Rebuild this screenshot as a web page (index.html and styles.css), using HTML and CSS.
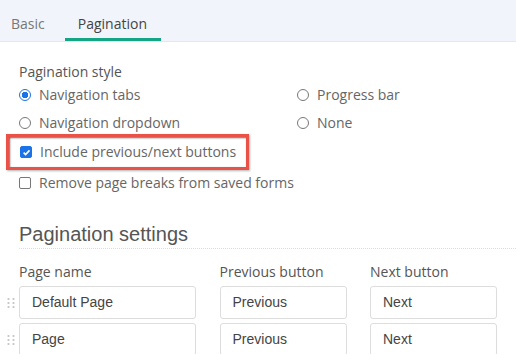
FILE: index.html
```html
<!DOCTYPE html>
<html>
<head>
    <title>Form settings</title>
    <meta charset="UTF-8">
    <link rel="stylesheet" href="styles.css">
</head>
<body>
    <div class="tabs">
        <div class="tab">Basic</div>
        <div class="tab active">Pagination</div>
    </div>

    <div class="panel">
        <div class="field-label">Pagination style</div>
        <div class="radio-grid">
            <label class="option"><span class="radio checked"></span>Navigation tabs</label>
            <label class="option"><span class="radio"></span>Progress bar</label>
            <label class="option"><span class="radio"></span>Navigation dropdown</label>
            <label class="option"><span class="radio"></span>None</label>
        </div>

        <div class="highlight">
            <label class="option">
                <span class="check checked">
                    <svg width="9" height="9" viewBox="0 0 10 10"><path d="M1.8 5.2 L4 7.4 L8.3 2.6" fill="none" stroke="#fff" stroke-width="1.8"/></svg>
                </span>Include previous/next buttons
            </label>
        </div>
        <label class="option"><span class="check"></span>Remove page breaks from saved forms</label>

        <h2 class="section-title">Pagination settings</h2>

        <div class="page-grid">
            <div class="field-label">Page name</div>
            <div class="field-label">Previous button</div>
            <div class="field-label">Next button</div>

            <div class="name-cell">
                <span class="handle"></span>
                <div class="input">Default Page</div>
            </div>
            <div class="input">Previous</div>
            <div class="input">Next</div>

            <div class="name-cell">
                <span class="handle"></span>
                <div class="input">Page</div>
            </div>
            <div class="input">Previous</div>
            <div class="input">Next</div>
        </div>
    </div>
</body>
</html>
```

FILE: styles.css
```css
body {
    margin: 0;
    font-family: "Open Sans", sans-serif;
    font-size: 14px;
    color: #555;
    background-color: white;
    overflow: hidden;
}
.tabs {
    display: flex;
    height: 41px;
    background-color: #f1f5fb;
    border-bottom: 1px solid #e3e8ef;
}
.tab {
    padding: 14px 11px 0 11px;
    margin-right: 9px;
    font-size: 14px;
    color: #777;
    box-sizing: border-box;
}
.tab.active {
    color: #444;
    padding: 14px 12px 0 13px;
    border-bottom: 3px solid #13a584;
    min-width: 96px;
}
.panel {
    padding: 20px 0 0 19px;
}
.field-label {
    font-size: 14px;
    color: #555;
    line-height: 20px;
}
.radio-grid {
    display: grid;
    grid-template-columns: 278px 1fr;
    row-gap: 8px;
    margin-top: 3px;
}
.option {
    display: flex;
    align-items: center;
    line-height: 20px;
    color: #666;
}
.radio {
    width: 12px;
    height: 12px;
    border: 1px solid #777;
    border-radius: 50%;
    margin-right: 8px;
    box-sizing: border-box;
}
.radio.checked {
    border: 1.5px solid #1a73e8;
    background: radial-gradient(circle, #1a73e8 0, #1a73e8 3px, white 3.5px);
}
.check {
    width: 12px;
    height: 12px;
    border: 1px solid #777;
    border-radius: 2px;
    margin-right: 8px;
    box-sizing: border-box;
    display: flex;
    align-items: center;
    justify-content: center;
}
.check.checked {
    background-color: #1a73e8;
    border-color: #1a73e8;
}
.highlight {
    margin: 1px 0 3px -13px;
    width: 226px;
    padding: 5px 0 5px 11px;
    border: 3px solid #ea5247;
    box-shadow: inset 1px 1px 2px rgba(0,0,0,0.6), 1px 1px 2px rgba(0,0,0,0.3);
}
.section-title {
    font-family: "Liberation Sans", Arial, sans-serif;
    font-weight: normal;
    font-size: 20px;
    color: #555;
    margin: 30px 0 0 0;
    padding-bottom: 2px;
    border-bottom: 1px dotted #ddd;
}
.page-grid {
    display: grid;
    grid-template-columns: 177px 127px 127px;
    column-gap: 23.5px;
    row-gap: 4px;
    margin-top: 13px;
}
.name-cell {
    display: flex;
    align-items: center;
    margin-left: -13px;
}
.handle {
    width: 9px;
    height: 12px;
    margin-right: 4px;
    background-image: radial-gradient(circle, #c8c8c8 1px, transparent 1.2px);
    background-size: 5px 4px;
}
.input {
    flex: 1;
    height: 33px;
    box-sizing: border-box;
    border: 1px solid #ddd;
    border-radius: 3px;
    padding: 0 12px;
    font-family: "Liberation Sans", Arial, sans-serif;
    font-size: 14px;
    color: #444;
    line-height: 31px;
}
```
